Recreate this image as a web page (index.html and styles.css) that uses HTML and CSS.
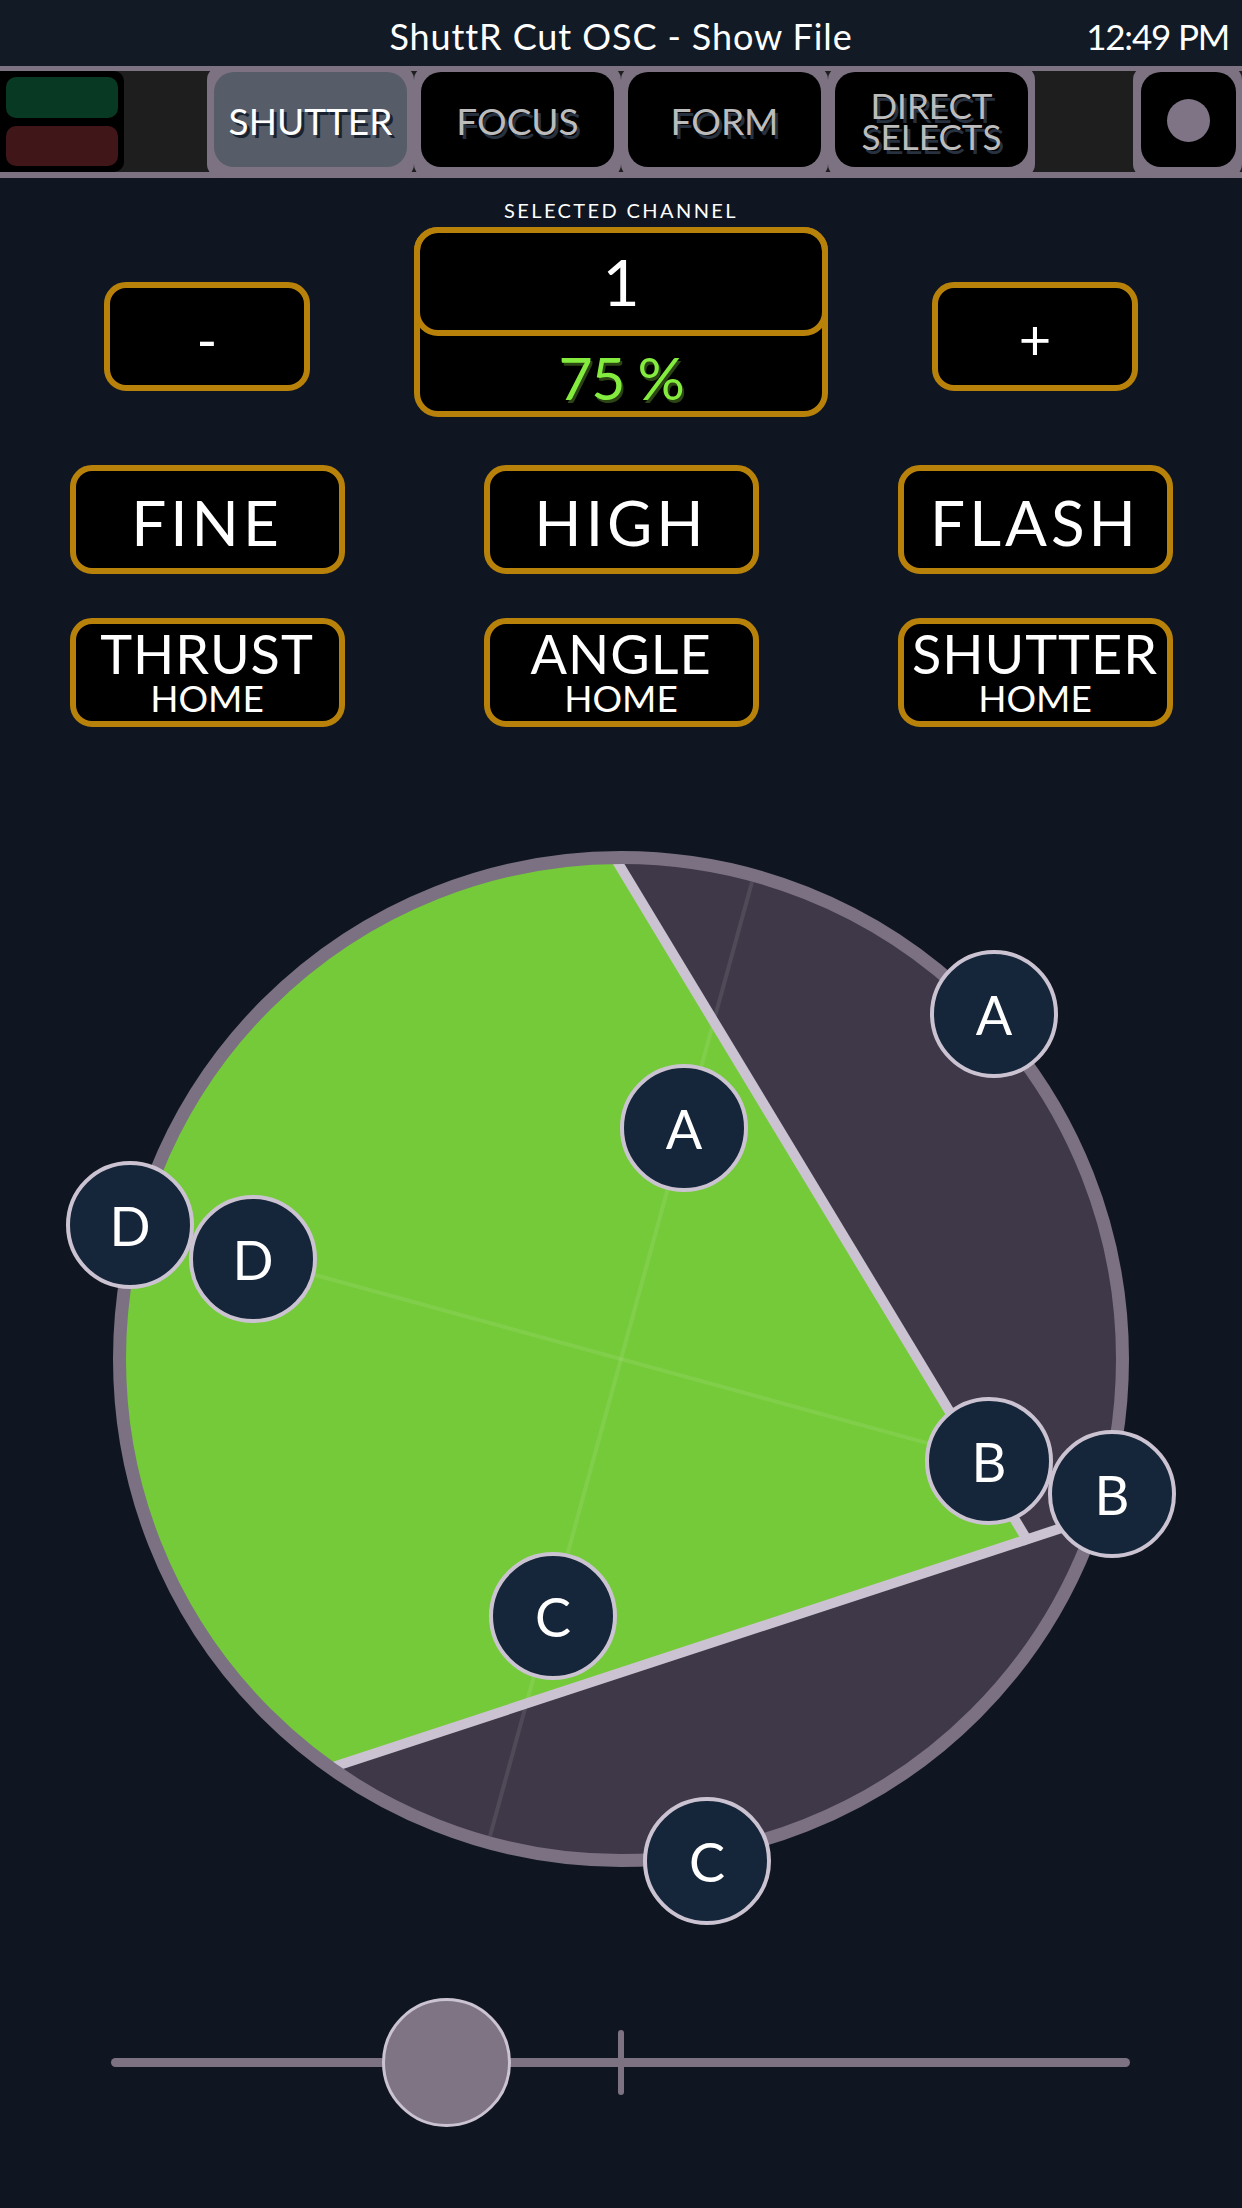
FILE: index.html
```html
<!DOCTYPE html>
<html lang="en">
<head>
<meta charset="utf-8">
<title>ShuttR Cut OSC - Show File</title>
<link rel="stylesheet" href="styles.css">
</head>
<body>
<header class="status">
  <div class="status-side"></div>
  <div class="title">ShuttR Cut OSC - Show File</div>
  <div class="status-side clock">12:49 PM</div>
</header>

<nav class="tabs">
  <div class="lights">
    <span class="pill pill-green"></span>
    <span class="pill pill-red"></span>
  </div>
  <div class="gap-a"></div>
  <div class="tab tab-active"><div class="tab-in">SHUTTER</div></div>
  <div class="tab"><div class="tab-in">FOCUS</div></div>
  <div class="tab"><div class="tab-in">FORM</div></div>
  <div class="tab"><div class="tab-in tab-two"><span class="tl">DIRECT</span><span class="tl">SELECTS</span></div></div>
  <div class="gap-b"></div>
  <div class="tab tab-rec"><div class="tab-in"><span class="rec-dot"></span></div></div>
</nav>

<main class="panel">
  <div class="sel-label">SELECTED CHANNEL</div>

  <div class="row row-top">
    <div class="btn btn-side"><span class="sym sym-minus">-</span></div>
    <div class="channel">
      <div class="ch-num">1</div>
      <div class="ch-level">75 %</div>
    </div>
    <div class="btn btn-side"><span class="sym">+</span></div>
  </div>

  <div class="row row-mid">
    <div class="btn btn-big">FINE</div>
    <div class="btn btn-big">HIGH</div>
    <div class="btn btn-big">FLASH</div>
  </div>

  <div class="row row-home">
    <div class="btn btn-home"><span class="home-main">THRUST</span><span class="home-sub">HOME</span></div>
    <div class="btn btn-home"><span class="home-main">ANGLE</span><span class="home-sub">HOME</span></div>
    <div class="btn btn-home"><span class="home-main">SHUTTER</span><span class="home-sub">HOME</span></div>
  </div>

  <svg class="diagram" width="1242" height="1200" viewBox="0 760 1242 1200" xmlns="http://www.w3.org/2000/svg">
    <defs>
      <clipPath id="disc"><circle cx="621" cy="1359" r="497"/></clipPath>
    </defs>
    <circle cx="621" cy="1359" r="497" fill="#3e3848"/>
    <g clip-path="url(#disc)">
      <path d="M556 764 L1027 1540 L0 1877 L0 764 Z" fill="#75ca39"/>
      <line x1="752" y1="882" x2="490" y2="1836" stroke="#ffffff" stroke-opacity="0.09" stroke-width="4"/>
      <line x1="144" y1="1228" x2="1098" y2="1490" stroke="#ffffff" stroke-opacity="0.09" stroke-width="4"/>
      <line x1="615" y1="858" x2="1029" y2="1543" stroke="#cbc3d1" stroke-width="10"/>
      <line x1="330" y1="1768" x2="1095" y2="1517" stroke="#cbc3d1" stroke-width="10"/>
    </g>
    <circle cx="621" cy="1359" r="501.5" fill="none" stroke="#7b7182" stroke-width="13"/>

    <g class="handle">
      <circle cx="994" cy="1014" r="62"/>
      <text x="994" y="1014">A</text>
    </g>
    <g class="handle">
      <circle cx="684" cy="1128" r="62"/>
      <text x="684" y="1128">A</text>
    </g>
    <g class="handle">
      <circle cx="130" cy="1225" r="62"/>
      <text x="130" y="1225">D</text>
    </g>
    <g class="handle">
      <circle cx="253" cy="1259" r="62"/>
      <text x="253" y="1259">D</text>
    </g>
    <g class="handle">
      <circle cx="989" cy="1461" r="62"/>
      <text x="989" y="1461">B</text>
    </g>
    <g class="handle">
      <circle cx="1112" cy="1494" r="62"/>
      <text x="1112" y="1494">B</text>
    </g>
    <g class="handle">
      <circle cx="553" cy="1616" r="62"/>
      <text x="553" y="1616">C</text>
    </g>
    <g class="handle">
      <circle cx="707" cy="1861" r="62"/>
      <text x="707" y="1861">C</text>
    </g>
  </svg>

  <div class="slider">
    <div class="track">
      <span class="tick"></span>
      <span class="thumb" style="left: 32.97%"></span>
    </div>
  </div>
</main>
</body>
</html>
```

FILE: styles.css
```css
html, body {
  margin: 0;
  padding: 0;
}

body {
  width: 1242px;
  height: 2208px;
  overflow: hidden;
  background: #0f1621;
  color: #ffffff;
  font-family: Lato, "Open Sans", "DejaVu Sans", sans-serif;
}

/* ---------- status bar ---------- */
.status {
  height: 66px;
  box-sizing: border-box;
  padding-top: 15px;
  background: #111a25;
  display: grid;
  grid-template-columns: 1fr auto 1fr;
  align-items: start;
  font-size: 36px;
  line-height: 43px;
}

.title {
  letter-spacing: 0.9px;
}

.clock {
  justify-self: end;
  padding-right: 13px;
  font-size: 35px;
  letter-spacing: -1.2px;
}

/* ---------- tab strip ---------- */
.tabs {
  height: 112px;
  display: flex;
  background: #1e1e1e;
  box-shadow: inset 0 5px 0 #7c7282, inset 0 -6px 0 #7c7282;
}

.lights {
  width: 124px;
  box-sizing: border-box;
  margin: 5px 0 6px;
  padding: 6px;
  background: #000000;
  border-radius: 0 10px 10px 0;
  display: flex;
  flex-direction: column;
  gap: 8px;
}

.pill {
  flex: 1;
  border-radius: 10px;
}

.pill-green { background: #083a23; }
.pill-red { background: #411618; }

.gap-a { width: 83px; }
.gap-b { width: 98px; }

.tab {
  width: 207px;
  box-sizing: border-box;
  padding: 6px 7px 11px;
  background: #7c7282;
  border-radius: 14px;
  display: flex;
}

.tab-in {
  flex: 1;
  background: #000000;
  border-radius: 20px;
  display: flex;
  align-items: center;
  justify-content: center;
  text-align: center;
  font-size: 37px;
  line-height: 42px;
  color: #bcbcbc;
  text-shadow: 3px 4px 0 #27313f;
  padding-top: 2px;
}

.tab-active .tab-in {
  background: #565c68;
  color: #ffffff;
  text-shadow: 3px 3px 0 #1a2230;
}

.tab-two {
  flex-direction: column;
  font-size: 35px;
  line-height: 31px;
  padding-top: 2px;
}

.tl {
  display: block;
}

.tab-rec {
  width: 109px;
  padding: 6px 6px 11px 8px;
}

.tab-rec .tab-in {
  padding-top: 0;
}

.rec-dot {
  width: 43px;
  height: 43px;
  border-radius: 50%;
  background: #7e7485;
  margin-top: 2px;
}

/* ---------- control panel ---------- */
.panel {
  display: flex;
  flex-direction: column;
}

.sel-label {
  margin-top: 20px;
  text-align: center;
  font-size: 20px;
  line-height: 24px;
  letter-spacing: 2.4px;
}

.row {
  display: grid;
  grid-template-columns: repeat(3, 414px);
  justify-items: center;
  align-items: start;
}

.row-top { margin-top: 5px; }
.row-mid { margin-top: 48px; }
.row-home { margin-top: 44px; }

.btn {
  box-sizing: border-box;
  height: 109px;
  border: 6px solid #b8820a;
  border-radius: 22px;
  background: #000000;
  display: flex;
  align-items: center;
  justify-content: center;
}

.btn-side {
  width: 206px;
  margin-top: 55px;
}

.sym {
  font-size: 56px;
  line-height: 60px;
  padding-top: 4px;
}

.sym-minus {
  padding-top: 0;
  margin-top: 6px;
}

.btn-big {
  width: 275px;
  font-size: 62px;
  letter-spacing: 4px;
  padding-top: 4px;
}

.btn-home {
  width: 275px;
  flex-direction: column;
}

.home-main {
  font-size: 54px;
  line-height: 50px;
  letter-spacing: 1px;
}

.home-sub {
  font-size: 37px;
  line-height: 38px;
}

.channel {
  width: 414px;
  height: 190px;
  box-sizing: border-box;
  border: 6px solid #b8820a;
  border-radius: 24px;
  background: #000000;
  display: flex;
  flex-direction: column;
}

.ch-num {
  margin: -6px -6px 0;
  height: 109px;
  box-sizing: border-box;
  border: 6px solid #b8820a;
  border-radius: 24px;
  display: flex;
  align-items: center;
  justify-content: center;
  font-size: 64px;
  line-height: 70px;
}

.ch-level {
  flex: 1;
  display: flex;
  align-items: center;
  justify-content: center;
  padding-top: 8px;
  font-size: 59px;
  line-height: 64px;
  letter-spacing: -1.5px;
  color: #84ec3e;
  text-shadow: 2px 3px 0 #2c4514;
}

/* ---------- shutter diagram ---------- */
.diagram {
  display: block;
  margin-top: 33px;
}

.handle circle {
  fill: #16263a;
  stroke: #cbc3d1;
  stroke-width: 4;
}

.handle text {
  fill: #ffffff;
  font-family: Lato, "Open Sans", sans-serif;
  font-size: 54px;
  text-anchor: middle;
  dominant-baseline: central;
}

/* ---------- angle slider ---------- */
.slider {
  height: 204px;
  box-sizing: border-box;
  padding: 0 112px 0 111px;
  display: flex;
  align-items: center;
}

.track {
  flex: 1;
  height: 9px;
  border-radius: 5px;
  background: #7c7282;
  position: relative;
}

.tick {
  position: absolute;
  left: 50%;
  top: -28px;
  width: 6px;
  height: 65px;
  margin-left: -3px;
  border-radius: 3px;
  background: #7c7282;
}

.thumb {
  position: absolute;
  top: -60px;
  width: 129px;
  height: 129px;
  margin-left: -64.5px;
  box-sizing: border-box;
  border: 3px solid #cbc3d1;
  border-radius: 50%;
  background: #7e7484;
}
```
